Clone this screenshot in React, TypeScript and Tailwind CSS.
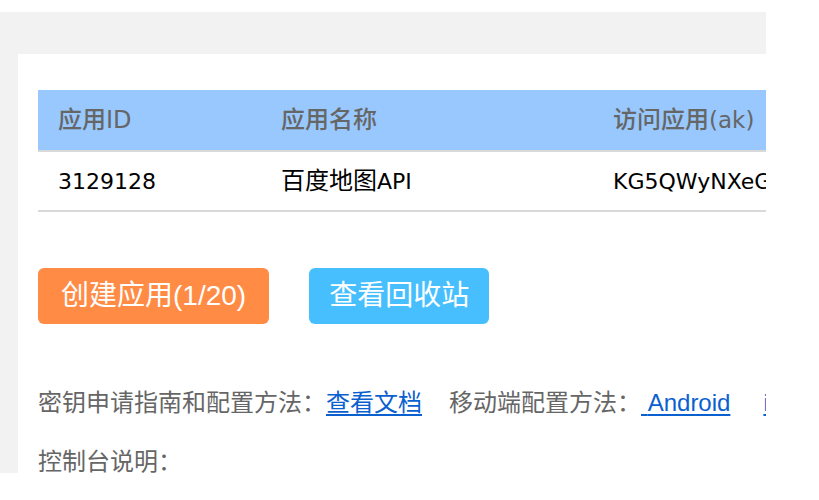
import React from "react";

const font = { fontFamily: '"Liberation Sans", "Noto Sans CJK SC", sans-serif' };
const tableFont = { fontFamily: '"DejaVu Sans", "Noto Sans CJK SC", sans-serif' };

export default function App() {
  return (
    <div className="h-[500px] w-[819px] bg-white" style={font}>
      <div className="mt-[12px] h-[461px] w-[766px] overflow-hidden bg-[#f2f2f2] pl-[18px] pt-[42px]">
        <div className="h-full w-[1100px] bg-white pl-[20px] pt-[36px]">
          {/* table */}
          <div className="w-[1000px]" style={tableFont}>
            <div className="grid h-[62px] grid-cols-[223px_332px_1fr] items-center border-b-2 border-[#d9d9d9] bg-[#98c8fd] pl-[20px] text-[24px] font-medium text-[#666]">
              <div>
                应用<span className="font-normal">ID</span>
              </div>
              <div>应用名称</div>
              <div>
                访问应用<span className="text-[23px] font-normal">(ak)</span>
              </div>
            </div>
            <div className="grid h-[60px] grid-cols-[223px_332px_1fr] items-center border-b-2 border-[#d9d9d9] pl-[20px] text-[22px] text-black">
              <div>3129128</div>
              <div>
                <span className="text-[24px]">百度地图</span>API
              </div>
              <div>KG5QWyNXeGt8pVbLmF2Ds</div>
            </div>
          </div>

          {/* buttons */}
          <div className="mt-[56px] flex gap-[40px]">
            <button className="h-[56px] rounded-[6px] bg-[#ff8b45] px-[23px] text-[28px] text-white">
              创建应用(1/20)
            </button>
            <button className="h-[56px] rounded-[6px] bg-[#47bfff] px-[20px] text-[28px] text-white">
              查看回收站
            </button>
          </div>

          {/* notes */}
          <div className="mt-[64px] flex items-center whitespace-nowrap text-[24px] leading-[30px] text-[#666]">
            <span>密钥申请指南和配置方法：</span>
            <a href="#" className="text-[#0b60cf] underline underline-offset-[3px]">
              查看文档
            </a>
            <span className="ml-[27px]">移动端配置方法：</span>
            <a href="#" className="text-[#0b60cf] underline underline-offset-[3px]">
              {"\u00a0"}Android
            </a>
            <a href="#" className="ml-[33px] text-[#0b60cf] underline underline-offset-[3px]">
              iOS
            </a>
          </div>
          <div className="mt-[29px] text-[24px] leading-[30px] text-[#666]">控制台说明：</div>
        </div>
      </div>
    </div>
  );
}
